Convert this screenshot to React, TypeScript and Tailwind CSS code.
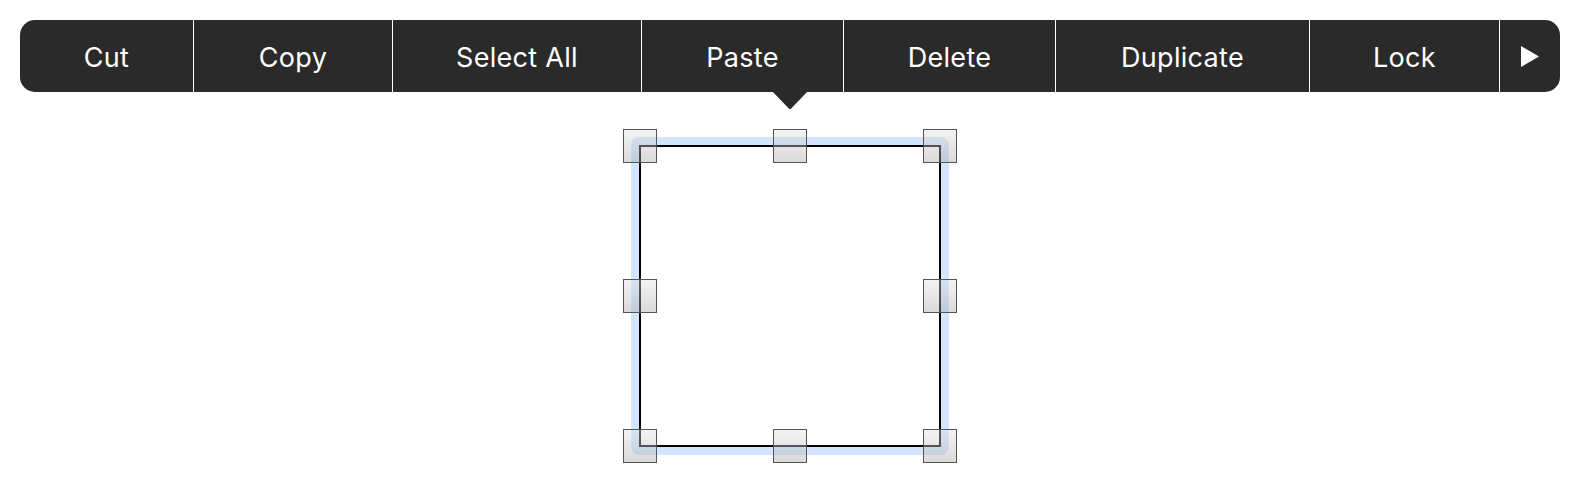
import React from "react";

const items: { label: string; w: string }[] = [
  { label: "Cut", w: "w-[173px]" },
  { label: "Copy", w: "w-[199px]" },
  { label: "Select All", w: "w-[249px]" },
  { label: "Paste", w: "w-[202px]" },
  { label: "Delete", w: "w-[212px]" },
  { label: "Duplicate", w: "w-[254px]" },
  { label: "Lock", w: "w-[190px]" },
];

function Handle({ pos }: { pos: string }) {
  return (
    <div
      className={`absolute ${pos} w-[34px] h-[34px] border border-[#555555] bg-[linear-gradient(to_bottom,rgba(226,226,226,0.42),rgba(166,166,166,0.42))]`}
    />
  );
}

export default function App() {
  return (
    <div
      className="w-[1580px] h-[483px] bg-white overflow-hidden"
      style={{ fontFamily: 'Inter, "Noto Sans", "Liberation Sans", sans-serif' }}
    >
      <div className="pt-[20px] px-[20px]">
        <div className="relative flex h-[72px] rounded-[15px] bg-[#2a2a2a] text-white">
          {items.map((it, i) => (
            <div
              key={it.label}
              className={`${it.w} h-full flex items-center justify-center pt-[2px] text-[27px] tracking-[0.3px] leading-none ${
                i > 0 ? "border-l border-white" : ""
              }`}
            >
              {it.label}
            </div>
          ))}
          <div className="flex-1 h-full flex items-center justify-center pt-[1px] border-l border-white">
            <svg width="18" height="21" viewBox="0 0 18 21">
              <path d="M0 0 L18 10.5 L0 21 Z" fill="#ffffff" />
            </svg>
          </div>
          <svg
            className="absolute top-[71px] left-[752px]"
            width="36"
            height="19"
            viewBox="0 0 36 19"
          >
            <path d="M0 0 L36 0 L19.2 17.4 Q18 18.6 16.8 17.4 Z" fill="#2a2a2a" />
          </svg>
        </div>
      </div>

      <div className="flex justify-center mt-[45px]">
        <div className="relative w-[318px] h-[318px] p-[8px] rounded-[8px] bg-[#d3e5fc]">
          <div className="w-full h-full border-2 border-black bg-white" />
          <Handle pos="left-[-8px] top-[-8px]" />
          <Handle pos="left-[142px] top-[-8px]" />
          <Handle pos="left-[292px] top-[-8px]" />
          <Handle pos="left-[-8px] top-[142px]" />
          <Handle pos="left-[292px] top-[142px]" />
          <Handle pos="left-[-8px] top-[292px]" />
          <Handle pos="left-[142px] top-[292px]" />
          <Handle pos="left-[292px] top-[292px]" />
        </div>
      </div>
    </div>
  );
}
